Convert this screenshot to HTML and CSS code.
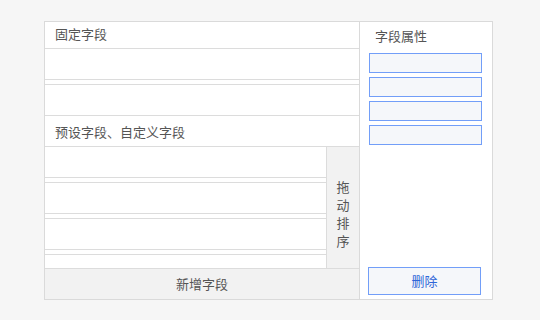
FILE: index.html
```html
<!DOCTYPE html>
<html lang="zh">
<head>
<meta charset="utf-8">
<title>字段</title>
<link rel="stylesheet" href="styles.css">
</head>
<body>
<div class="panel">
  <div class="left">
    <div class="sec-head sec-head-1">固定字段</div>
    <div class="fixed-list">
      <div class="item"></div>
      <div class="item"></div>
    </div>
    <div class="sec-head sec-head-2">预设字段、自定义字段</div>
    <div class="sortable">
      <div class="list">
        <div class="item"></div>
        <div class="item"></div>
        <div class="item"></div>
        <div class="item"></div>
      </div>
      <div class="handle"><span class="handle-text">拖动排序</span></div>
    </div>
    <div class="footer">新增字段</div>
  </div>
  <div class="right">
    <div class="props-title">字段属性</div>
    <div class="inputs">
      <div class="input"></div>
      <div class="input"></div>
      <div class="input"></div>
      <div class="input"></div>
    </div>
    <div class="del-btn">删除</div>
  </div>
</div>
</body>
</html>
```

FILE: styles.css
```css
* { box-sizing: border-box; }
html, body { margin: 0; padding: 0; }
body {
  background: #f6f6f6;
  font-family: "Noto Sans CJK SC", "Noto Sans", sans-serif;
  font-size: 13px;
  color: #555;
}
.panel {
  margin: 21px 0 0 44px;
  width: 449px;
  height: 279px;
  border: 1px solid #dadada;
  background: #fff;
  display: flex;
}
.left {
  width: 314px;
  display: flex;
  flex-direction: column;
}
.sec-head {
  padding-left: 10px;
  border-bottom: 1px solid #dcdcdc;
}
.sec-head-1 { height: 27px; line-height: 23px; }
.sec-head-2 { height: 31px; line-height: 31px; }
.item {
  height: 31px;
  border-bottom: 1px solid #dcdcdc;
}
.item + .item {
  margin-top: 4px;
  height: 32px;
  border-top: 1px solid #dcdcdc;
}
.sortable {
  height: 121px;
  display: flex;
  overflow: hidden;
}
.list {
  flex: 1;
  overflow: hidden;
}
.handle {
  width: 33px;
  border-left: 1px solid #dcdcdc;
  background: #f2f2f2;
  display: flex;
  justify-content: center;
  padding-top: 31px;
}
.handle-text {
  width: 13px;
  line-height: 18px;
  text-align: center;
  color: #555;
}
.footer {
  flex: 1;
  border-top: 1px solid #dcdcdc;
  background: #f2f2f2;
  text-align: center;
  line-height: 29px;
}
.right {
  flex: 1;
  border-left: 1px solid #dadada;
  display: flex;
  flex-direction: column;
}
.props-title {
  padding: 4px 0 0 15px;
  line-height: 20px;
  height: 31px;
}
.inputs {
  display: flex;
  flex-direction: column;
  gap: 4px;
  padding: 0 10px 0 9px;
}
.input {
  height: 20px;
  border: 1px solid #729ef8;
  background: #f5f7fa;
}
.del-btn {
  margin: auto 11px 4px 8px;
  height: 28px;
  border: 1px solid #729ef8;
  background: #f5f7fa;
  color: #2f66d8;
  text-align: center;
  line-height: 26px;
}
```
